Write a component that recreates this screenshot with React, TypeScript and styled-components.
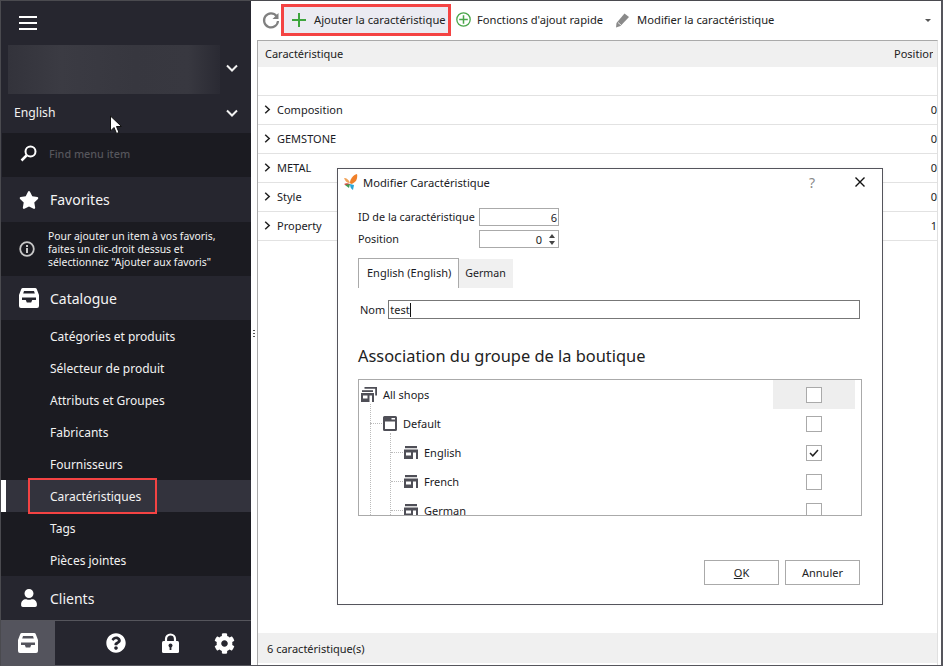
import React from 'react';
import styled, { createGlobalStyle } from 'styled-components';
import { FaStar, FaUser, FaQuestionCircle, FaCog } from 'react-icons/fa';

const Global = createGlobalStyle`
  html, body { margin: 0; padding: 0; background: #fff; }
  body { font-family: "Noto Sans", "Open Sans", sans-serif; font-size: 11px; color: #1a1a24; }
  svg { flex: none; }
`;

const Page = styled.div`
  position: relative;
  width: 943px;
  height: 666px;
  box-sizing: border-box;
  display: flex;
  overflow: hidden;
  background: #fff;
  border-top: 1px solid #4a4a4f;
  border-left: 1px solid #4a4a4f;
  border-right: 2px solid #55555c;
  border-bottom: 1px solid #55555c;
`;

const Sidebar = styled.aside`
  width: 250px;
  flex: none;
  display: flex;
  flex-direction: column;
  background: #26262f;
  color: #fff;
`;
const Burger = styled.div`
  height: 44px;
  flex: none;
  display: flex;
  align-items: center;
  padding-left: 18px;
`;
const BlurRow = styled.div`
  display: flex;
  align-items: center;
  height: 49px;
  flex: none;
  padding-left: 7px;
`;
const BlurBlock = styled.div`
  width: 213px;
  height: 49px;
  background: linear-gradient(90deg, #33333b 0%, #3b3b43 25%, #37373f 60%, #383840 85%, #2a2a33 100%);
`;
const ChevronBox = styled.div<{ $lift: number }>`
  width: 24px;
  display: flex;
  justify-content: center;
  margin-left: auto;
  margin-right: 7px;
  margin-bottom: ${p => p.$lift}px;
`;
const LangRow = styled.div`
  height: 39px;
  flex: none;
  display: flex;
  align-items: center;
  padding: 0 0 2px 13px;
  box-sizing: border-box;
  font-size: 12.2px;
  color: #f2f2f2;
`;
const SearchRow = styled.div`
  height: 44px;
  flex: none;
  display: flex;
  align-items: center;
  gap: 12px;
  margin-left: 1px;
  padding: 0 0 3px 18px;
  box-sizing: border-box;
  background: #1b1b21;
  color: #56565c;
  font-size: 10.8px;
  font-weight: 500;
`;
const SectionHead = styled.div<{ $h?: number }>`
  height: ${p => p.$h ?? 44}px;
  flex: none;
  display: flex;
  align-items: center;
  font-size: 14px;
  color: #f4f4f4;
`;
const SectionIcon = styled.div`
  width: 42px;
  display: flex;
  justify-content: center;
  flex: none;
  padding-left: 7px;
  box-sizing: content-box;
`;
const InfoBox = styled.div`
  height: 54px;
  flex: none;
  display: flex;
  align-items: center;
  background: #1b1b21;
  font-size: 10.4px;
  line-height: 13px;
  color: #f2f2f2;
`;
const InfoIcon = styled.div`
  width: 47px;
  flex: none;
  display: flex;
  justify-content: center;
  padding-left: 5px;
  box-sizing: border-box;
`;
const MenuList = styled.div`
  flex: none;
  background: #1b1b21;
`;
const MenuItem = styled.div<{ $active?: boolean }>`
  position: relative;
  height: 32px;
  display: flex;
  align-items: center;
  font-size: 12px;
  color: #f2f2f2;
  background: ${p => (p.$active ? '#33333d' : 'transparent')};
  border-left: ${p => (p.$active ? '5px solid #fff' : '0')};
  padding-left: ${p => (p.$active ? '44px' : '49px')};
`;
const RedBoxSide = styled.div`
  position: absolute;
  left: 22px;
  top: -2px;
  width: 129px;
  height: 36px;
  box-sizing: border-box;
  border: 2px solid #f44343;
`;
const BottomBar = styled.div`
  flex: 1;
  display: flex;
  align-items: stretch;
  border-top: 1px solid #55555c;
  background: #26262f;
`;
const BottomTab = styled.div`
  width: 54px;
  display: flex;
  align-items: center;
  justify-content: center;
  background: #54545d;
  margin-right: 34px;
`;
const BottomIcon = styled.div`
  width: 54px;
  display: flex;
  align-items: center;
  justify-content: center;
`;

const Main = styled.main`
  flex: 1;
  min-width: 0;
  display: flex;
  flex-direction: column;
  background: #fff;
  position: relative;
`;
const SplitDots = styled.div`
  position: absolute;
  left: 2px;
  top: 329px;
  width: 2px;
  height: 8px;
  background: repeating-linear-gradient(180deg, #555 0 1px, transparent 1px 3px);
`;
const Toolbar = styled.div`
  height: 39px;
  flex: none;
  display: flex;
  align-items: center;
  padding-left: 11px;
  box-sizing: border-box;
  font-size: 11.2px;
  color: #222;
`;
const ToolButton = styled.div<{ $marked?: boolean }>`
  display: flex;
  align-items: center;
  gap: ${p => (p.$marked ? '8px' : '6px')};
  height: 32px;
  box-sizing: border-box;
  white-space: nowrap;
  margin-top: -1px;
  padding-bottom: 1px;
  ${p => p.$marked && `
    width: 170px;
    border: 3px solid #f44343;
    background: #ebebf2;
    padding-left: 8px;
    margin-left: 1px;
    margin-right: 5px;
  `}
`;
const ToolSpacer = styled.div`
  width: 11px;
  flex: none;
`;
const Caret = styled.div`
  margin-left: auto;
  margin-right: 10px;
  width: 0;
  height: 0;
  border-left: 3px solid transparent;
  border-right: 3px solid transparent;
  border-top: 3px solid #555;
`;
const Table = styled.div`
  flex: 1;
  margin-left: 6px;
  margin-right: 3px;
  border-top: 1px solid #aaa;
  border-left: 1px solid #aaa;
  border-right: 1px solid #e0e0e0;
  display: flex;
  flex-direction: column;
`;
const HeadRow = styled.div`
  height: 26px;
  flex: none;
  display: flex;
  align-items: center;
  justify-content: space-between;
  background: #f0f0f0;
  padding: 0 0 1px 7px;
  box-sizing: border-box;
  font-size: 11px;
  color: #222;
`;
const HeadRight = styled.div`
  width: 39px;
  overflow: hidden;
  white-space: nowrap;
  margin-right: 4px;
`;
const FilterRow = styled.div`
  height: 29px;
  flex: none;
  border-bottom: 1px solid #e2e2e2;
  box-sizing: border-box;
`;
const DataRow = styled.div`
  height: 29px;
  flex: none;
  box-sizing: border-box;
  border-bottom: 1px solid #e2e2e2;
  display: flex;
  align-items: center;
  padding: 0 0 2px 6px;
  gap: 6px;
  color: #1a1a24;
`;
const RowValue = styled.span`
  margin-left: auto;
  color: #222;
`;
const Spacer = styled.div`
  flex: 1;
`;
const Footer = styled.div`
  height: 30px;
  flex: none;
  background: #f0f0f0;
  display: flex;
  align-items: center;
  padding-left: 9px;
  margin-bottom: 2px;
  color: #222;
`;

const Dialog = styled.section`
  position: absolute;
  left: 336px;
  top: 167px;
  width: 546px;
  height: 437px;
  box-sizing: border-box;
  border: 1px solid #55555c;
  background: #fff;
  display: flex;
  flex-direction: column;
  color: #1a1a24;
  box-shadow: 0 0 4px rgba(0,0,0,0.05);
`;
const TitleBar = styled.header`
  height: 28px;
  flex: none;
  display: flex;
  align-items: center;
  padding: 0 0 2px 6px;
  box-sizing: border-box;
  gap: 5px;
  font-size: 11.2px;
`;
const HelpMark = styled.span`
  margin-left: auto;
  font-size: 14px;
  color: #8a8a8a;
  margin-right: 34px;
`;
const CloseBtn = styled.div`
  width: 12px;
  height: 12px;
  margin-right: 16px;
  display: flex;
`;
const DialogBody = styled.div`
  flex: 1;
  display: flex;
  flex-direction: column;
  padding: 11px 22px 0 20px;
`;
const FieldRow = styled.div`
  display: flex;
  align-items: center;
  height: 18px;
  margin-bottom: 4px;
  font-size: 10.8px;
`;
const FieldLabel = styled.label`
  width: 121px;
  flex: none;
  padding-bottom: 1px;
`;
const NumBox = styled.div`
  width: 80px;
  height: 18px;
  box-sizing: border-box;
  border: 1px solid #aaa;
  display: flex;
  align-items: center;
  justify-content: flex-end;
  padding-right: 1px;
  gap: 5px;
  font-size: 11px;
`;
const Spin = styled.div`
  width: 9px;
  display: flex;
  flex-direction: column;
  align-items: center;
  gap: 3px;
  margin-right: 1px;
`;
const SpinUp = styled.i`
  width: 0; height: 0;
  border-left: 3px solid transparent;
  border-right: 3px solid transparent;
  border-bottom: 4px solid #444;
`;
const SpinDown = styled.i`
  width: 0; height: 0;
  border-left: 3px solid transparent;
  border-right: 3px solid transparent;
  border-top: 4px solid #444;
`;
const Tabs = styled.div`
  display: flex;
  margin-top: 6px;
  height: 30px;
`;
const Tab = styled.div<{ $on?: boolean }>`
  box-sizing: border-box;
  height: ${p => (p.$on ? '30px' : '29px')};
  display: flex;
  align-items: center;
  padding: ${p => (p.$on ? '0 7px 2px 8px' : '0 7px 1px 6px')};
  font-size: ${p => (p.$on ? '11px' : '10.6px')};
  background: ${p => (p.$on ? '#fff' : '#f0f0f0')};
  border: ${p => (p.$on ? '1px solid #aaa' : '0')};
  border-bottom: 0;
  margin-top: ${p => (p.$on ? '0' : '1px')};
`;
const NameRow = styled.div`
  display: flex;
  align-items: center;
  margin-top: 12px;
  padding-left: 2px;
  gap: 3px;
`;
const NameInput = styled.div`
  flex: 1;
  height: 19px;
  box-sizing: border-box;
  border: 1px solid #777;
  display: flex;
  align-items: center;
  padding-left: 1px;
  color: #222;
`;
const Cursor = styled.i`
  width: 1px;
  height: 14px;
  background: #111;
`;
const AssocTitle = styled.h2`
  margin: 26px 0 0;
  font-size: 16.4px;
  line-height: 22px;
  font-weight: 400;
  color: #222;
`;
const Tree = styled.div`
  margin-top: 12px;
  height: 137px;
  box-sizing: border-box;
  border: 1px solid #aaa;
  overflow: hidden;
  position: relative;
  margin-right: -2px;
`;
const TreeRow = styled.div<{ $level: number }>`
  position: relative;
  height: 29px;
  display: flex;
  align-items: center;
  gap: 6px;
  padding-left: ${p => (p.$level === 0 ? 2 : p.$level === 1 ? 24 : 45)}px;
  &::before {
    content: '';
    display: ${p => (p.$level ? 'block' : 'none')};
    position: absolute;
    top: 14px;
    left: ${p => (p.$level === 1 ? 11 : 32)}px;
    width: 12px;
    border-top: 1px dotted #bbb;
  }
`;
const TreeLine = styled.i<{ $x: number; $top: number }>`
  position: absolute;
  left: ${p => p.$x}px;
  top: ${p => p.$top}px;
  bottom: 0;
  border-left: 1px dotted #bbb;
`;
const CheckCell = styled.div<{ $hl?: boolean }>`
  position: absolute;
  left: 414px;
  top: 0;
  width: 82px;
  height: 29px;
  background: ${p => (p.$hl ? '#eeeeee' : 'transparent')};
  display: flex;
  align-items: center;
  justify-content: center;
`;
const Check = styled.div`
  width: 16px;
  height: 16px;
  box-sizing: border-box;
  border: 1px solid #aaa;
  background: #fff;
  display: flex;
  align-items: center;
  justify-content: center;
`;
const Buttons = styled.div`
  display: flex;
  justify-content: flex-end;
  gap: 6px;
  margin-top: 44px;
`;
const Btn = styled.div`
  width: 75px;
  height: 25px;
  box-sizing: border-box;
  border: 1px solid #aaa;
  display: flex;
  align-items: center;
  justify-content: center;
  color: #222;
`;
const Underline = styled.span`
  text-decoration: underline;
`;
const Pointer = styled.svg`
  position: absolute;
  left: 108px;
  top: 114px;
`;

const Chevron = ({ c = '#f2f2f2' }: { c?: string }) => (
  <svg width="12" height="8" viewBox="0 0 12 8"><path d="M1 1.500l5 5 5-5" fill="none" stroke={c} strokeWidth="2" /></svg>
);
const RowChevron = () => (
  <svg width="7" height="9" viewBox="0 0 7 9"><path d="M1.200 .8l4 3.700-4 3.700" fill="none" stroke="#222" strokeWidth="1.500" /></svg>
);
const Tray = ({ s = 20 }: { s?: number }) => (
  <svg width={s} height={s} viewBox="0 0 20 20" fill="#fff">
    <path fillRule="evenodd" d="M4 0H16a2 2 0 0 1 1.900 1.400L20 7V18a2 2 0 0 1-2 2H2a2 2 0 0 1-2-2V7L2.100 1.400A2 2 0 0 1 4 0ZM5 3H15L15.800 5.500H4.200ZM3 9.500H17V12H13.200L12.200 14.500H7.800L6.800 12H3Z" />
  </svg>
);
const Lock = () => (
  <svg width="17" height="20" viewBox="0 0 17 20">
    <path fill="none" stroke="#fff" strokeWidth="2.200" d="M4 9V6a4.500 4.500 0 0 1 9 0v3" />
    <rect x="0" y="8" width="17" height="12" rx="1.500" fill="#fff" />
    <circle cx="8.500" cy="12.500" r="2" fill="#26262f" />
    <rect x="7.600" y="13" width="1.800" height="4" fill="#26262f" />
  </svg>
);
const ShopIcon = () => (
  <svg width="14" height="13" viewBox="0 0 14 13" fill="#4f4f57">
    <rect x="1" y="0" width="12" height="2.200" />
    <path fillRule="evenodd" d="M0 3.500h14V13H0zM2 6.500v3h5v-3zM9 6.500V13h3V6.500z" />
  </svg>
);
const AllShopsIcon = () => (
  <svg width="16" height="15" viewBox="0 0 16 15" fill="#4f4f57">
    <path d="M3.500 0H16v8.500h-1.800V1.800H3.500z" />
    <path d="M1 3.200h11v1.800H1z" />
    <path fillRule="evenodd" d="M0 6h13v9H0zM2 8.500v3h4.500v-3zM8.500 8.500V15H11V8.500z" />
  </svg>
);
const WindowIcon = () => (
  <svg width="14" height="15" viewBox="0 0 14 15">
    <path fillRule="evenodd" fill="#4f4f57" d="M1.500 0h11A1.500 1.500 0 0 1 14 1.500v12a1.500 1.500 0 0 1-1.500 1.500h-11A1.500 1.500 0 0 1 0 13.500v-12A1.500 1.500 0 0 1 1.500 0zM2 5.500v7.500h10V5.500z" />
    <rect x="8.500" y="2" width="3.500" height="1.500" fill="#fff" />
  </svg>
);
const Logo = () => (
  <svg width="14" height="16" viewBox="0 0 14 16">
    <path d="M6 9C6 5 9 1 13 0c1 4-1 9-6 10z" fill="#f0802a" />
    <path d="M0 4c3 0 5 2 6 5-3 0-5-2-6-5z" fill="#f0a35a" />
    <path d="M0 10c2-1 4-1 6 0-1 2-3 2-6 0z" fill="#d8413a" />
    <path d="M1 11l5-1-1 4z" fill="#3e9d55" />
    <path d="M6 10l4 1-1 5c-2-1-3-3-3-6z" fill="#2aa6d8" />
  </svg>
);

const menu = ['Catégories et produits', 'Sélecteur de produit', 'Attributs et Groupes', 'Fabricants', 'Fournisseurs', 'Caractéristiques', 'Tags', 'Pièces jointes'];
const rows = [['Composition', '0'], ['GEMSTONE', '0'], ['METAL', '0'], ['Style', '0'], ['Property', '1']];

export default function App() {
  return (
    <Page>
      <Global />
      <Sidebar>
        <Burger>
          <svg width="18" height="14" viewBox="0 0 18 14" fill="#fff"><rect width="18" height="2" /><rect y="6" width="18" height="2" /><rect y="12" width="18" height="2" /></svg>
        </Burger>
        <BlurRow><BlurBlock /><ChevronBox $lift={3}><Chevron /></ChevronBox></BlurRow>
        <LangRow>English<ChevronBox $lift={0}><Chevron /></ChevronBox></LangRow>
        <SearchRow>
          <svg width="17" height="17" viewBox="0 0 17 17" fill="none" stroke="#fff"><circle cx="10.500" cy="6.500" r="5" strokeWidth="2" /><path d="M6.500 10.500L1.500 15.500" strokeWidth="2.500" /></svg>
          <span>Find menu item</span>
        </SearchRow>
        <SectionHead $h={45}><SectionIcon><FaStar size={20} color="#fff" /></SectionIcon>Favorites</SectionHead>
        <InfoBox>
          <InfoIcon>
            <svg width="16" height="16" viewBox="0 0 16 16"><circle cx="8" cy="8" r="6.800" fill="none" stroke="#c8c8c8" strokeWidth="1.800" /><rect x="7" y="7" width="2" height="5" fill="#c8c8c8" /><rect x="7" y="4" width="2" height="2" fill="#c8c8c8" /></svg>
          </InfoIcon>
          <div>Pour ajouter un item à vos favoris,<br />faites un clic-droit dessus et<br />sélectionnez "Ajouter aux favoris"</div>
        </InfoBox>
        <SectionHead><SectionIcon><Tray /></SectionIcon>Catalogue</SectionHead>
        <MenuList>
          {menu.map(m => (
            <MenuItem key={m} $active={m === 'Caractéristiques'}>
              {m}
              {m === 'Caractéristiques' && <RedBoxSide />}
            </MenuItem>
          ))}
        </MenuList>
        <SectionHead><SectionIcon><FaUser size={18} color="#fff" /></SectionIcon>Clients</SectionHead>
        <BottomBar>
          <BottomTab><Tray /></BottomTab>
          <BottomIcon><FaQuestionCircle size={20} color="#fff" /></BottomIcon>
          <BottomIcon><Lock /></BottomIcon>
          <BottomIcon><FaCog size={21} color="#fff" /></BottomIcon>
        </BottomBar>
      </Sidebar>
      <Main>
        <SplitDots />
        <Toolbar>
          <svg width="18" height="18" viewBox="0 0 18 18" fill="none"><path d="M14.500 4A7 7 0 1 0 16 9" stroke="#808080" strokeWidth="2.200" /><path d="M16.500 1v6h-6z" fill="#808080" /></svg>
          <ToolButton $marked>
            <svg width="14" height="14" viewBox="0 0 14 14"><path d="M7 0v14M0 7h14" stroke="#3ea53e" strokeWidth="2" /></svg>
            Ajouter la caractéristique
          </ToolButton>
          <ToolButton>
            <svg width="15" height="15" viewBox="0 0 15 15" fill="none" stroke="#4aa64a"><circle cx="7.500" cy="7.500" r="6.700" strokeWidth="1.300" /><path d="M7.500 3.200v8.600M3.200 7.500h8.600" strokeWidth="1.500" /></svg>
            Fonctions d'ajout rapide
          </ToolButton>
          <ToolSpacer />
          <ToolButton>
            <svg width="17" height="16" viewBox="0 0 17 16" fill="#8a8a8a"><path d="M10.500 1.500l4.500 3.500-8.500 9-4.500 1.500 .5-4.500z" /><path d="M4 10.500l3.500 3" stroke="#fff" strokeWidth=".8" /></svg>
            Modifier la caractéristique
          </ToolButton>
          <Caret />
        </Toolbar>
        <Table>
          <HeadRow><span>Caractéristique</span><HeadRight>Position</HeadRight></HeadRow>
          <FilterRow />
          {rows.map(([n, v]) => (
            <DataRow key={n}><RowChevron /><span>{n}</span><RowValue>{v}</RowValue></DataRow>
          ))}
          <Spacer />
          <Footer>6 caractéristique(s)</Footer>
        </Table>
      </Main>
      <Dialog>
        <TitleBar>
          <Logo />
          Modifier Caractéristique
          <HelpMark>?</HelpMark>
          <CloseBtn>
            <svg width="12" height="12" viewBox="0 0 12 12"><path d="M1.500 1.500l9 9M10.500 1.500l-9 9" stroke="#111" strokeWidth="1.400" /></svg>
          </CloseBtn>
        </TitleBar>
        <DialogBody>
          <FieldRow><FieldLabel>ID de la caractéristique</FieldLabel><NumBox>6</NumBox></FieldRow>
          <FieldRow><FieldLabel>Position</FieldLabel><NumBox>0<Spin><SpinUp /><SpinDown /></Spin></NumBox></FieldRow>
          <Tabs><Tab $on>English (English)</Tab><Tab>German</Tab></Tabs>
          <NameRow>Nom<NameInput>test<Cursor /></NameInput></NameRow>
          <AssocTitle>Association du groupe de la boutique</AssocTitle>
          <Tree>
            <TreeLine $x={11} $top={24} />
            <TreeLine $x={31} $top={53} />
            <TreeRow $level={0}><AllShopsIcon />All shops<CheckCell $hl><Check /></CheckCell></TreeRow>
            <TreeRow $level={1}><WindowIcon />Default<CheckCell><Check /></CheckCell></TreeRow>
            <TreeRow $level={2}><ShopIcon />English<CheckCell><Check><svg width="10" height="8" viewBox="0 0 10 8"><path d="M1 4l2.800 2.800L9 1" fill="none" stroke="#222" strokeWidth="1.500" /></svg></Check></CheckCell></TreeRow>
            <TreeRow $level={2}><ShopIcon />French<CheckCell><Check /></CheckCell></TreeRow>
            <TreeRow $level={2}><ShopIcon />German<CheckCell><Check /></CheckCell></TreeRow>
          </Tree>
          <Buttons><Btn><Underline>O</Underline>K</Btn><Btn>Annuler</Btn></Buttons>
        </DialogBody>
      </Dialog>
      <Pointer width="14" height="20" viewBox="0 0 14 20"><path d="M1.500 1v15l3.500-3.500 2.500 6 2.500-1-2.500-6h5z" fill="#fff" stroke="#111" strokeWidth="1" /></Pointer>
    </Page>
  );
}
